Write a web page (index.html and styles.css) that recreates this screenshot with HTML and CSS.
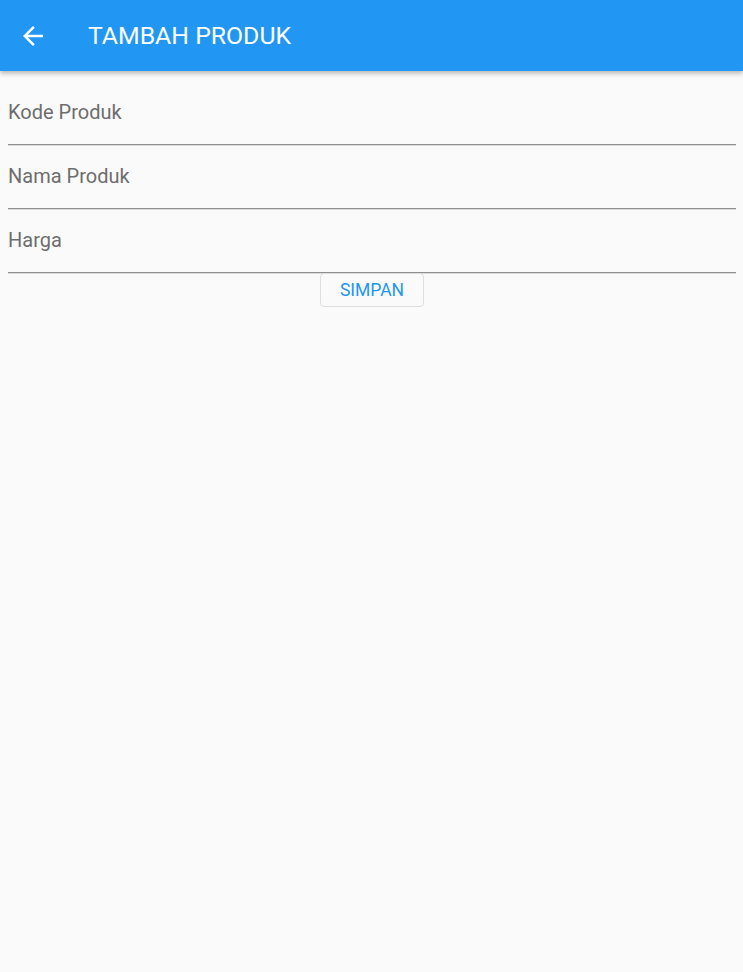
FILE: index.html
```html
<!DOCTYPE html>
<html lang="id">
<head>
<meta charset="utf-8">
<title>Tambah Produk</title>
<link rel="stylesheet" href="styles.css">
</head>
<body>
<header class="appbar">
  <span class="back">
    <svg viewBox="0 0 24 24" width="30" height="30" aria-hidden="true"><path fill="#fff" d="M20 11H7.83l5.59-5.59L12 4l-8 8 8 8 1.41-1.41L7.83 13H20v-2z"/></svg>
  </span>
  <h1 class="title">TAMBAH PRODUK</h1>
</header>
<main class="form">
  <div class="field"><span class="label">Kode Produk</span></div>
  <div class="field"><span class="label">Nama Produk</span></div>
  <div class="field"><span class="label">Harga</span></div>
  <div class="actions"><button class="btn" type="button">SIMPAN</button></div>
</main>
</body>
</html>
```
FILE: styles.css
```css
html, body {
  margin: 0;
  padding: 0;
  height: 100%;
  background: #fafafa;
  font-family: Roboto, "Liberation Sans", sans-serif;
}
.appbar {
  height: 71px;
  background: #2196f3;
  display: flex;
  align-items: center;
  box-shadow: 0 2px 4px rgba(0,0,0,0.2), 0 4px 5px rgba(0,0,0,0.08);
  position: relative;
}
.back {
  width: 30px;
  height: 30px;
  margin-left: 18px;
  display: flex;
}
.title {
  margin: 0 0 0 40px;
  font-size: 24.8px;
  font-weight: 400;
  color: #fff;
  line-height: 30px;
}
.form {
  padding: 10px 7px 0 8px;
}
.field {
  height: 63px;
  border-bottom: 1px solid #8e8e8e;
  box-shadow: 0 1px 0 rgba(0,0,0,0.12);
  box-sizing: content-box;
}
.label {
  display: block;
  padding-top: 19px;
  font-size: 20px;
  line-height: 24px;
  color: #6e6e6e;
}
.actions {
  display: flex;
  justify-content: center;
}
.btn {
  width: 104px;
  height: 34px;
  border: 1px solid #dedede;
  border-radius: 4px;
  background: #fafafa;
  color: #2196f3;
  font-family: Roboto, "Liberation Sans", sans-serif;
  font-size: 17.5px;
  padding: 0;
}
```
